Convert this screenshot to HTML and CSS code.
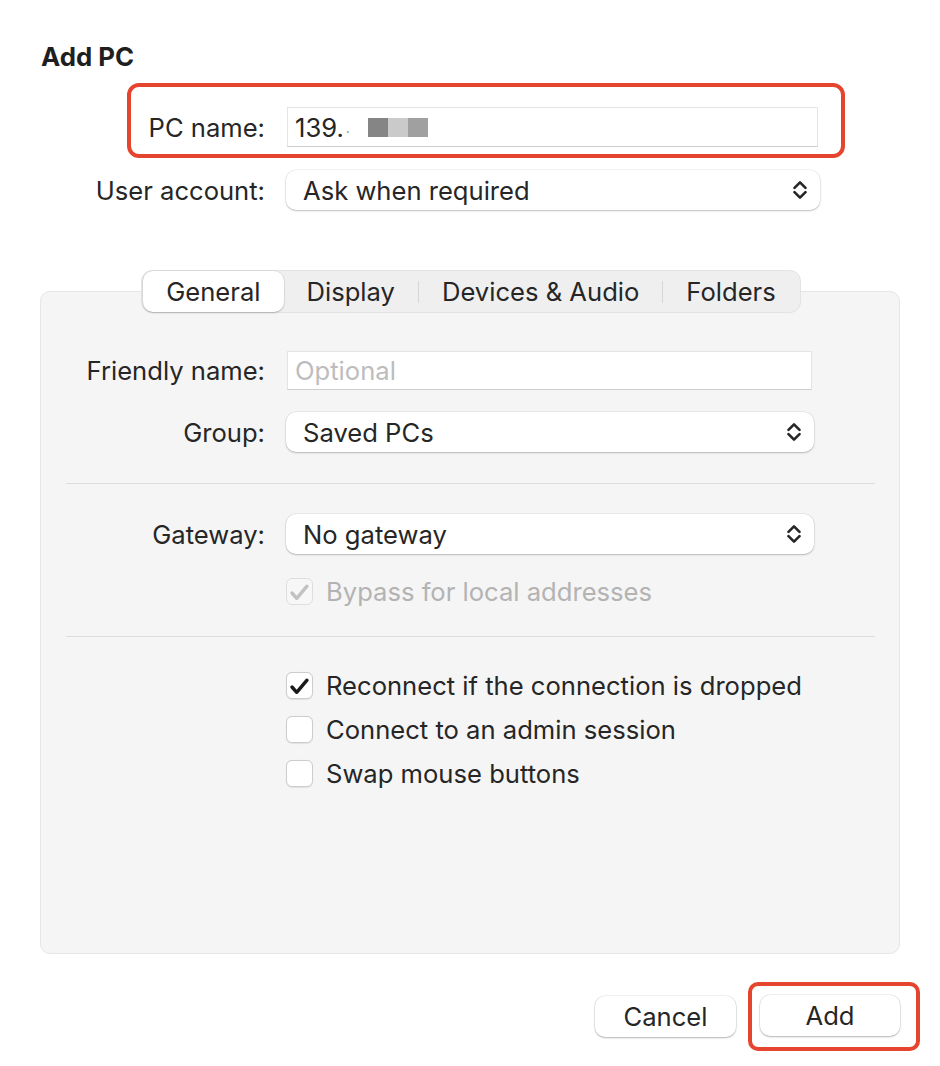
FILE: index.html
```html
<!DOCTYPE html>
<html lang="en">
<head>
<meta charset="utf-8">
<title>Add PC</title>
<link rel="stylesheet" href="styles.css">
</head>
<body>
<div class="dialog">
  <h1 class="title">Add PC</h1>

  <div class="highlight pc-row">
    <label class="hl-label">PC name:</label>
    <div class="textfield pcname">139.<span class="dot">.</span><span class="mask"><i class="m1"></i><i class="m2"></i><i class="m3"></i></span></div>
  </div>

  <div class="row account-row">
    <label class="label">User account:</label>
    <div class="select account">
      <span>Ask when required</span>
      <svg class="chev" viewBox="0 0 14 22" width="14" height="22"><path d="M1.5 8.8 L7 3.3 L12.5 8.8 M1.5 13.2 L7 18.7 L12.5 13.2"/></svg>
    </div>
  </div>

  <div class="tabs-wrap">
    <div class="tabs">
      <div class="tab active">General</div>
      <div class="tab">Display</div>
      <span class="sep"></span>
      <div class="tab">Devices &amp; Audio</div>
      <span class="sep"></span>
      <div class="tab">Folders</div>
    </div>

    <div class="panel">
      <div class="prow">
        <label class="plabel">Friendly name:</label>
        <div class="textfield friendly placeholder">Optional</div>
      </div>
      <div class="prow group-row">
        <label class="plabel">Group:</label>
        <div class="select pselect">
          <span>Saved PCs</span>
          <svg class="chev" viewBox="0 0 14 22" width="14" height="22"><path d="M1.5 8.8 L7 3.3 L12.5 8.8 M1.5 13.2 L7 18.7 L12.5 13.2"/></svg>
        </div>
      </div>

      <div class="divider d1"></div>

      <div class="prow gateway-row">
        <label class="plabel">Gateway:</label>
        <div class="select pselect">
          <span>No gateway</span>
          <svg class="chev" viewBox="0 0 14 22" width="14" height="22"><path d="M1.5 8.8 L7 3.3 L12.5 8.8 M1.5 13.2 L7 18.7 L12.5 13.2"/></svg>
        </div>
      </div>
      <div class="check disabled bypass">
        <span class="box checked"><svg viewBox="0 0 26 26" width="26" height="26"><path d="M6 15 L10.7 20.3 L21 8.2"/></svg></span>
        <span class="ctext">Bypass for local addresses</span>
      </div>

      <div class="divider d2"></div>

      <div class="checks">
        <div class="check">
          <span class="box checked"><svg viewBox="0 0 26 26" width="26" height="26"><path d="M6 15 L10.7 20.3 L21 8.2"/></svg></span>
          <span class="ctext">Reconnect if the connection is dropped</span>
        </div>
        <div class="check">
          <span class="box"></span>
          <span class="ctext">Connect to an admin session</span>
        </div>
        <div class="check">
          <span class="box"></span>
          <span class="ctext">Swap mouse buttons</span>
        </div>
      </div>
    </div>
  </div>

  <div class="buttons">
    <button class="btn cancel">Cancel</button>
    <div class="highlight add-hl">
      <button class="btn add">Add</button>
    </div>
  </div>
</div>
</body>
</html>
```

FILE: styles.css
```css
* { box-sizing: border-box; }

html, body {
  margin: 0;
  padding: 0;
  background: #ffffff;
}

body {
  font-family: "Inter", "Noto Sans", "Liberation Sans", sans-serif;
  font-size: 25.6px;
  color: #262626;
  width: 940px;
  height: 1066px;
  overflow: hidden;
}

.dialog {
  padding-top: 42px;
}

.title {
  margin: 0 0 11px 41px;
  font-size: 25.8px;
  line-height: 30px;
  font-weight: 700;
  color: #1f1f1f;
}

/* red annotation box */
.highlight {
  border: 4px solid #e5452f;
  border-radius: 12px;
}

.pc-row {
  margin-left: 127px;
  width: 718px;
  height: 75px;
  padding: 20px 0 7px 0;
  display: flex;
  align-items: center;
  gap: 22px;
}

.hl-label {
  width: 134px;
  text-align: right;
  white-space: nowrap;
}

.textfield {
  background: #ffffff;
  border: 1px solid #e4e4e4;
  border-bottom-color: #cdcdcd;
  height: 40px;
  padding-left: 7px;
  display: flex;
  align-items: center;
  white-space: nowrap;
}

.pcname {
  width: 531px;
}

.pcname .dot {
  font-size: 14px;
  color: #8a8a8a;
  margin-left: 2px;
  align-self: flex-end;
  padding-bottom: 10px;
}

.mask {
  display: flex;
  margin-left: 18px;
  height: 19px;
}

.mask i {
  display: block;
  width: 20px;
  height: 19px;
}

.mask .m1 { background: #858585; }
.mask .m2 { background: #cacaca; }
.mask .m3 { background: #a0a0a0; }

.row {
  display: flex;
  align-items: center;
  gap: 21px;
}

.account-row {
  margin-top: 12px;
}

.label {
  width: 265px;
  text-align: right;
  white-space: nowrap;
}

.select {
  background: #ffffff;
  border-radius: 10px;
  height: 40px;
  padding: 0 13px 0 17px;
  display: flex;
  align-items: center;
  justify-content: space-between;
  box-shadow: 0 1px 2px rgba(0, 0, 0, 0.22), 0 0 0 0.5px rgba(0, 0, 0, 0.09);
  white-space: nowrap;
}

.account {
  width: 534px;
}

.chev {
  display: block;
  flex: none;
}

.chev path {
  fill: none;
  stroke: #262626;
  stroke-width: 2.6;
  stroke-linecap: round;
  stroke-linejoin: round;
}

/* tabs + panel */
.tabs-wrap {
  margin-top: 60px;
  display: flex;
  flex-direction: column;
  align-items: center;
}

.tabs {
  position: relative;
  z-index: 1;
  display: flex;
  align-items: center;
  height: 43px;
  margin-bottom: -22px;
  margin-left: 2px;
  padding: 0 1px;
  background: #efefef;
  border: 1px solid #e3e3e3;
  border-radius: 11px;
}

.tab {
  height: 41px;
  padding: 0 23px;
  display: flex;
  align-items: center;
  white-space: nowrap;
  color: #262626;
  border-radius: 10px;
}

.tab.active {
  background: #ffffff;
  box-shadow: 0 1px 2px rgba(0, 0, 0, 0.2), 0 0 0 0.5px rgba(0, 0, 0, 0.08);
}

.sep {
  width: 1px;
  height: 22px;
  background: #d6d6d6;
}

.panel {
  align-self: flex-start;
  margin-left: 40px;
  width: 860px;
  height: 663px;
  background: #f5f5f5;
  border: 1px solid #e6e6e6;
  border-radius: 10px;
  padding-top: 59px;
}

.prow {
  display: flex;
  align-items: center;
  gap: 21px;
}

.plabel {
  width: 224px;
  text-align: right;
  white-space: nowrap;
}

.friendly {
  width: 525px;
  height: 39px;
  margin-left: 1px;
}

.placeholder {
  color: #bdbdbd;
}

.pselect {
  width: 528px;
}

.group-row {
  margin-top: 22px;
}

.divider {
  height: 1px;
  background: #dcdcdc;
  margin: 0 24px 0 25px;
}

.d1 { margin-top: 31px; }
.gateway-row { margin-top: 30px; }

.check {
  display: flex;
  align-items: center;
  gap: 13px;
  height: 26px;
  padding-left: 245px;
  white-space: nowrap;
}

.bypass { margin-top: 24px; }

.d2 { margin-top: 32px; }

.checks {
  margin-top: 35px;
  display: flex;
  flex-direction: column;
  gap: 18px;
}

.box {
  width: 27px;
  height: 27px;
  flex: none;
  background: #ffffff;
  border: 1px solid #cdcdcd;
  border-radius: 6px;
  box-shadow: 0 0.5px 1px rgba(0, 0, 0, 0.08);
  position: relative;
}

.box svg {
  position: absolute;
  left: -1px;
  top: -1px;
}

.box path {
  fill: none;
  stroke: #1a1a1a;
  stroke-width: 3.4;
  stroke-linecap: round;
  stroke-linejoin: round;
}

.disabled .box {
  background: #f7f7f7;
  border-color: #dedede;
  box-shadow: none;
}

.disabled .box path {
  stroke: #c2c2c2;
}

.disabled .ctext {
  color: #b3b3b3;
}

/* buttons */
.buttons {
  margin-top: 28px;
  display: flex;
  justify-content: flex-end;
  align-items: center;
  gap: 12px;
  padding-right: 20px;
}

.add-hl {
  padding: 9px 16px 11px 8px;
  border-radius: 10px;
}

.btn {
  font-family: inherit;
  font-size: 25.6px;
  color: #262626;
  background: #ffffff;
  border: none;
  border-radius: 10px;
  width: 141px;
  height: 41px;
  padding: 0;
  box-shadow: 0 1px 2px rgba(0, 0, 0, 0.25), 0 0 0 0.5px rgba(0, 0, 0, 0.1);
}

.add {
  width: 140px;
  display: block;
}
```
